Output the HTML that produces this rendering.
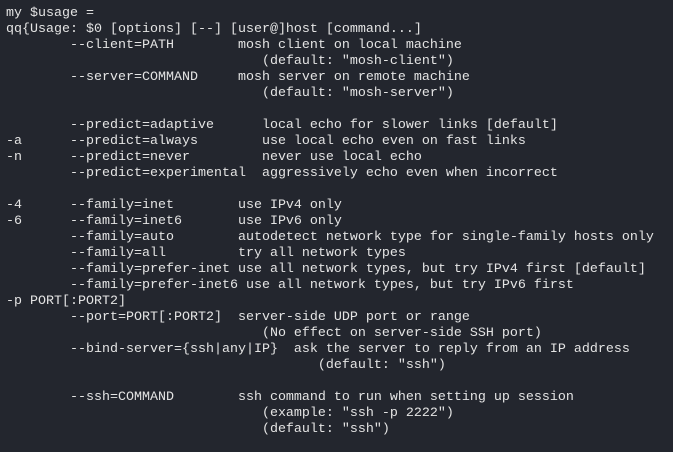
<!DOCTYPE html>
<html><head><style>
html,body{margin:0;padding:0;background:#23262e;width:673px;height:452px;overflow:hidden}
pre{margin:0;padding:6px 0 0 6px;font-family:"Liberation Mono",monospace;font-size:13.33px;line-height:16px;color:#e4e4e4}
</style></head><body><pre>my $usage =
qq{Usage: $0 [options] [--] [user@]host [command...]
        --client=PATH        mosh client on local machine
                                (default: "mosh-client")
        --server=COMMAND     mosh server on remote machine
                                (default: "mosh-server")

        --predict=adaptive      local echo for slower links [default]
-a      --predict=always        use local echo even on fast links
-n      --predict=never         never use local echo
        --predict=experimental  aggressively echo even when incorrect

-4      --family=inet        use IPv4 only
-6      --family=inet6       use IPv6 only
        --family=auto        autodetect network type for single-family hosts only
        --family=all         try all network types
        --family=prefer-inet use all network types, but try IPv4 first [default]
        --family=prefer-inet6 use all network types, but try IPv6 first
-p PORT[:PORT2]
        --port=PORT[:PORT2]  server-side UDP port or range
                                (No effect on server-side SSH port)
        --bind-server={ssh|any|IP}  ask the server to reply from an IP address
                                       (default: "ssh")

        --ssh=COMMAND        ssh command to run when setting up session
                                (example: "ssh -p 2222")
                                (default: "ssh")</pre></body></html>
